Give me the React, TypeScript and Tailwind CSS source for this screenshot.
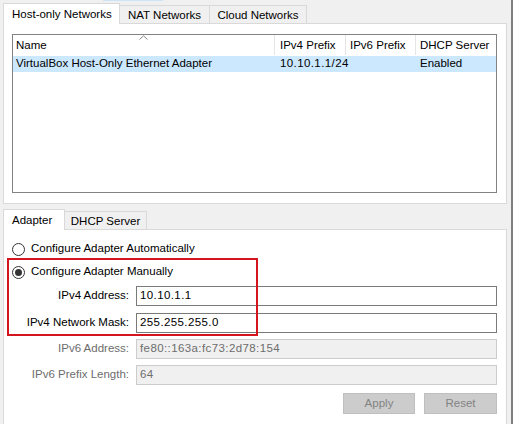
import React from 'react';

const font = { fontFamily: '"Segoe UI", "Liberation Sans", Arial, sans-serif' };

function Tab({ label, active, width }: { label: string; active?: boolean; width: string }) {
  if (active) {
    return (
      <div
        className={`${width} h-[21px] -mb-px relative z-10 bg-white border border-b-0 border-[#d9d9d9] pl-[8px] pt-[2px] text-[11.5px] text-black`}
      >
        {label}
      </div>
    );
  }
  return (
    <div
      className={`${width} h-[18px] bg-[#f0f0f0] border border-l-0 border-b-0 border-[#d9d9d9] text-center pt-[1px] text-[11.5px] text-black`}
    >
      {label}
    </div>
  );
}

function Radio({ checked, label }: { checked?: boolean; label: string }) {
  return (
    <div className="flex items-center h-[16px]">
      <span className="w-[13px] h-[13px] rounded-full border border-[#333] bg-white flex items-center justify-center">
        {checked && <span className="w-[7px] h-[7px] rounded-full bg-[#333]" />}
      </span>
      <span className="ml-[6px] text-[11.5px] text-black">{label}</span>
    </div>
  );
}

function Field({ label, value, disabled, className = '' }: { label: string; value: string; disabled?: boolean; className?: string }) {
  return (
    <div className={`flex items-center ${className}`}>
      <div className={`w-[121px] text-right text-[11.5px] ${disabled ? 'text-[#6d6d6d]' : 'text-black'}`}>{label}</div>
      <div
        className={`ml-[7px] flex-1 h-[20px] border flex items-center pl-[3px] text-[11.5px] tracking-[0.4px] ${
          disabled ? 'border-[#cccccc] bg-[#f0f0f0] text-[#6d6d6d]' : 'border-[#7a7a7a] bg-white text-black'
        }`}
      >
        {value}
      </div>
    </div>
  );
}

export default function App() {
  return (
    <div className="w-[513px] h-[424px] overflow-hidden bg-[#f0f0f0] border-r-2 border-[#7f7f7f] relative" style={font}>
      <div className="h-[1px] w-[60px] ml-[103px] bg-[#cce4f7]" />

      {/* top tab strip */}
      <div className="flex items-end pl-[3px] mt-[2px]">
        <Tab label="Host-only Networks" active width="w-[117px]" />
        <Tab label="NAT Networks" width="w-[90px]" />
        <Tab label="Cloud Networks" width="w-[97px]" />
      </div>
      <div className="ml-[3px] w-[504px] h-[181px] bg-white border border-[#d9d9d9] pt-[10px] pl-[8px] pr-[9px]">
        <div className="h-[159px] border border-[#828282] bg-white text-[11.5px] text-black">
          <div className="flex h-[20px]">
            <div className="w-[262px] relative pl-[3px] flex items-end pb-[1px] border-r border-[#e5e5e5]">
              Name
              <svg className="absolute left-[126px] top-[0px]" width="9" height="5" viewBox="0 0 9 5">
                <path d="M0.5 4.5 L4.5 0.8 L8.5 4.5" fill="none" stroke="#888" strokeWidth="1" />
              </svg>
            </div>
            <div className="w-[71px] pl-[5px] flex items-end pb-[1px] border-r border-[#e5e5e5]">IPv4 Prefix</div>
            <div className="w-[70px] pl-[4px] flex items-end pb-[1px] border-r border-[#e5e5e5]">IPv6 Prefix</div>
            <div className="flex-1 pl-[4px] flex items-end pb-[1px]">DHCP Server</div>
          </div>
          <div className="flex h-[16px] mt-[1px] bg-[#cce8ff] items-center">
            <div className="w-[262px] pl-[3px]">VirtualBox Host-Only Ethernet Adapter</div>
            <div className="w-[71px] pl-[5px] tracking-[0.4px]">10.10.1.1/24</div>
            <div className="w-[70px] pl-[4px]" />
            <div className="flex-1 pl-[4px]">Enabled</div>
          </div>
        </div>
      </div>

      {/* bottom tab strip */}
      <div className="flex items-end pl-[3px] mt-[5px]">
        <Tab label="Adapter" active width="w-[62px]" />
        <Tab label="DHCP Server" width="w-[82px]" />
      </div>
      <div className="ml-[3px] w-[504px] h-[220px] bg-white border border-[#d9d9d9] pt-[11px] pl-[8px] pr-[9px]">
        <Radio label="Configure Adapter Automatically" />
        <div className="mt-[7px]">
          <Radio checked label="Configure Adapter Manually" />
        </div>
        <div className="-ml-[4px]">
          <Field className="mt-[6px]" label="IPv4 Address:" value="10.10.1.1" />
          <Field className="mt-[7px]" label="IPv4 Network Mask:" value="255.255.255.0" />
          <Field className="mt-[6px]" label="IPv6 Address:" value="fe80::163a:fc73:2d78:154" disabled />
          <Field className="mt-[6px]" label="IPv6 Prefix Length:" value="64" disabled />
        </div>
        <div className="flex justify-end gap-[9px] mt-[8px]">
          <button type="button" disabled className="w-[72px] h-[21px] bg-[#cccccc] border border-[#bfbfbf] text-[11.5px] text-[#838383]">
            Apply
          </button>
          <button type="button" disabled className="w-[73px] h-[21px] bg-[#cccccc] border border-[#bfbfbf] text-[11.5px] text-[#838383]">
            Reset
          </button>
        </div>
      </div>

      {/* red annotation box */}
      <div className="absolute left-[7px] top-[258px] w-[251px] h-[78px] border-2 border-[#d3161d] pointer-events-none" />
    </div>
  );
}
